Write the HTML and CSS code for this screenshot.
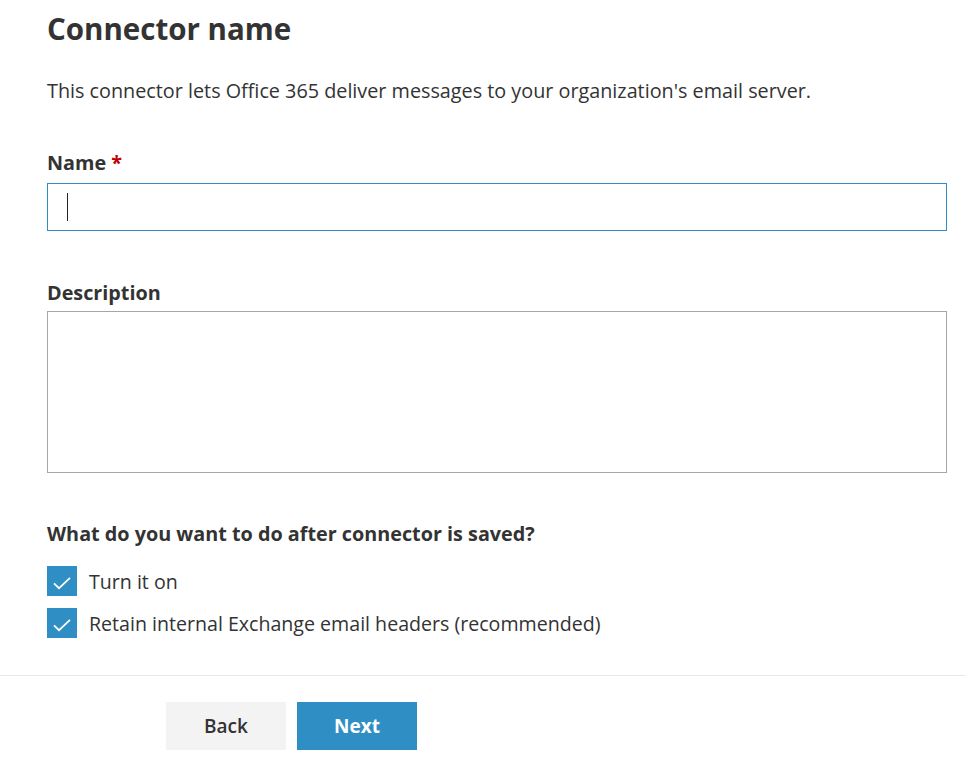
FILE: index.html
```html
<!DOCTYPE html>
<html lang="en">
<head>
<meta charset="utf-8">
<title>Connector name</title>
<link rel="stylesheet" href="styles.css">
</head>
<body>
<main class="page">
  <h1 class="title">Connector name</h1>
  <p class="intro">This connector lets Office 365 deliver messages to your organization's email server.</p>

  <label class="field-label label-name" for="name">Name <span class="req">*</span></label>
  <div class="input-box" id="name"><span class="caret"></span></div>

  <label class="field-label label-desc" for="desc">Description</label>
  <div class="textarea-box" id="desc"></div>

  <p class="field-label question">What do you want to do after connector is saved?</p>
  <div class="checks">
    <div class="check-row">
      <span class="box"><svg viewBox="0 0 30 30" width="30" height="30"><path d="M7 17.3 L12 22.2 L23 11.8" fill="none" stroke="#fff" stroke-width="1.7"/></svg></span>
      <span class="check-label">Turn it on</span>
    </div>
    <div class="check-row">
      <span class="box"><svg viewBox="0 0 30 30" width="30" height="30"><path d="M7 17.3 L12 22.2 L23 11.8" fill="none" stroke="#fff" stroke-width="1.7"/></svg></span>
      <span class="check-label">Retain internal Exchange email headers (recommended)</span>
    </div>
  </div>
</main>
<footer class="footer">
  <button class="btn btn-back" type="button">Back</button>
  <button class="btn btn-next" type="button">Next</button>
</footer>
</body>
</html>
```

FILE: styles.css
```css
html, body {
  margin: 0;
  padding: 0;
  background: #fff;
}
body {
  font-family: "Open Sans", "Noto Sans", "Liberation Sans", sans-serif;
  color: #333;
  width: 966px;
  overflow: hidden;
}
.page {
  padding: 11px 19px 0 47px;
  display: flex;
  flex-direction: column;
}
.title {
  margin: 0;
  font-size: 29.5px;
  line-height: 36px;
  font-weight: 700;
  color: #333;
}
.intro {
  margin: 32px 0 0;
  font-size: 19.8px;
  line-height: 24px;
  color: #333;
}
.field-label {
  display: block;
  margin: 0;
  font-size: 19.8px;
  line-height: 24px;
  font-weight: 700;
  color: #333;
}
.label-name { margin-top: 48px; }
.req { color: #c00000; }
.input-box {
  margin-top: 8px;
  height: 48px;
  box-sizing: border-box;
  border: 1px solid #2f8fc5;
  position: relative;
}
.caret {
  position: absolute;
  left: 19px;
  top: 9px;
  width: 1px;
  height: 28px;
  background: #222;
}
.label-desc { margin-top: 50px; }
.textarea-box {
  margin-top: 6px;
  height: 162px;
  box-sizing: border-box;
  border: 1px solid #a6a6a6;
}
.question { margin-top: 49px; }
.checks {
  margin-top: 20px;
  display: flex;
  flex-direction: column;
  gap: 12px;
  margin-bottom: 37px;
}
.check-row {
  display: flex;
  align-items: center;
  gap: 12px;
  height: 30px;
}
.box {
  width: 30px;
  height: 30px;
  background: #2f8fc5;
  display: block;
}
.box svg { display: block; }
.check-label {
  font-size: 19.6px;
  line-height: 24px;
  padding-top: 2px;
  color: #333;
}
.footer {
  border-top: 1px solid #e9e9e9;
  padding: 26px 0 0 166px;
  display: flex;
  gap: 11px;
}
.btn {
  width: 120px;
  height: 48px;
  border: none;
  font-family: inherit;
  font-size: 19px;
  padding: 0;
  cursor: pointer;
}
.btn-back {
  background: #f3f3f3;
  color: #333;
  font-weight: 600;
}
.btn-next {
  background: #2f8fc5;
  color: #fff;
  font-weight: 700;
}
```
